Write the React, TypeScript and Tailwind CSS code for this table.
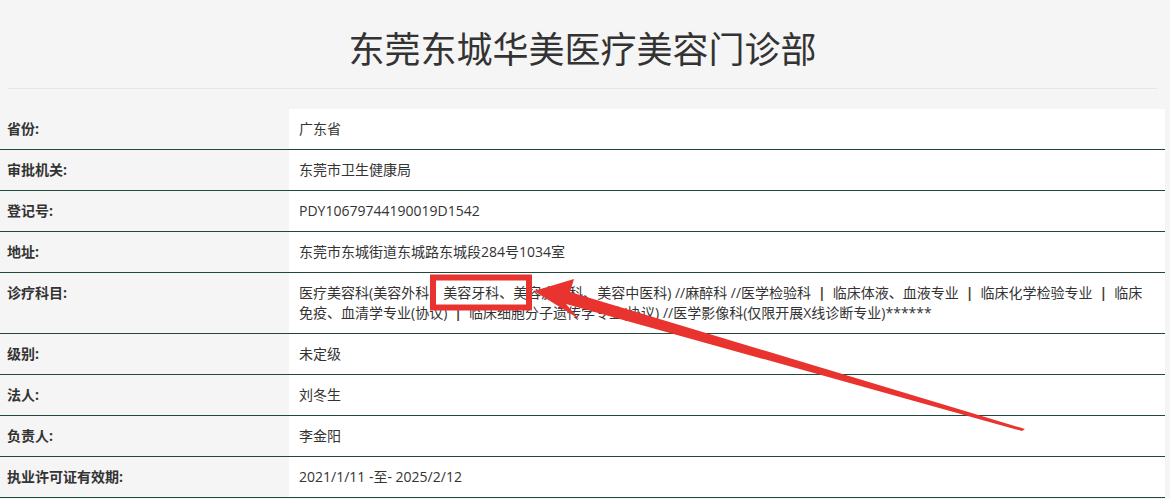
// Clinic licence detail card — static rebuild of the "机构信息" table with the
// red highlight box + arrow drawn over it as an overlay svg.

const Bar = () => <span className="mx-[7px] font-bold text-[#4a3b30]">|</span>;

const rows: { label: string; value: React.ReactNode }[] = [
  { label: "省份:", value: "广东省" },
  { label: "审批机关:", value: "东莞市卫生健康局" },
  { label: "登记号:", value: "PDY10679744190019D1542" },
  { label: "地址:", value: "东莞市东城街道东城路东城段284号1034室" },
  {
    label: "诊疗科目:",
    value: (
      <>
        <span className="whitespace-nowrap">
          医疗美容科(美容外科、美容牙科、美容皮肤科、美容中医科) //麻醉科 //医学检验科<Bar />临床体液、血液专业<Bar />临床化学检验专业<Bar />临床
        </span>
        <br />
        <span className="whitespace-nowrap">
          免疫、血清学专业(协议)<Bar />临床细胞分子遗传学专业(协议) //医学影像科(仅限开展X线诊断专业)******
        </span>
      </>
    ),
  },
  { label: "级别:", value: "未定级" },
  { label: "法人:", value: "刘冬生" },
  { label: "负责人:", value: "李金阳" },
  { label: "执业许可证有效期:", value: "2021/1/11 -至- 2025/2/12" },
];

const fontCls = "font-['Open_Sans','Noto_Sans_CJK_SC',sans-serif]";

export default function App() {
  return (
    <div className={`relative min-h-[499px] w-[1170px] overflow-hidden bg-[#f5f5f5] text-[#333] ${fontCls}`}>
      <div className="pr-[5px]">
        <div className="mx-[8px] border-b border-[#e6e6e6] pb-[20px] pt-[26px] text-center">
          <h1 className="font-['Noto_Sans_CJK_SC',sans-serif] text-[36px] leading-[42px] font-normal text-[#333]">东莞东城华美医疗美容门诊部</h1>
        </div>

        <div className="mt-[20px]">
          {rows.map((r) => (
            <div key={r.label} className="grid grid-cols-[289px_1fr] border-b border-[#1f4a3a]">
              <div className="px-[7px] py-[10px] text-[14px] leading-[20px] font-bold">{r.label}</div>
              <div className="bg-white px-[10px] py-[10px] text-[14px] leading-[20px]">{r.value}</div>
            </div>
          ))}
        </div>
      </div>

      {/* red annotation: highlight box + arrow */}
      <svg className="pointer-events-none absolute inset-0" width="1170" height="499" viewBox="0 0 1170 499">
        <rect x="433" y="277.5" width="96" height="30" fill="none" stroke="#e8332f" strokeWidth="6" />
        <polygon fill="#e8332f" points="534,291 574,279 570,292 1025,429 1022,431 566,304 579,319" />
      </svg>
    </div>
  );
}
